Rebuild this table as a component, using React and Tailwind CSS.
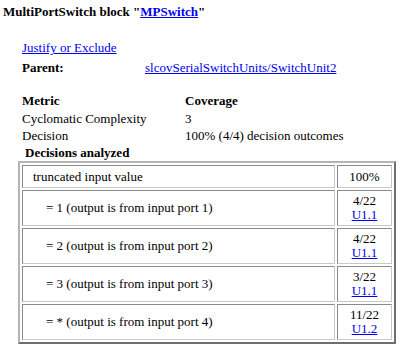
import React from 'react';

const rows = [
  { label: '= 1 (output is from input port 1)', count: '4/22', link: 'U1.1' },
  { label: '= 2 (output is from input port 2)', count: '4/22', link: 'U1.1' },
  { label: '= 3 (output is from input port 3)', count: '3/22', link: 'U1.1' },
  { label: '= * (output is from input port 4)', count: '11/22', link: 'U1.2' },
];

const cell =
  'border border-t-[#8a8a8a] border-l-[#8a8a8a] border-r-[#c8c8c8] border-b-[#c8c8c8]';

const App = () => {
  return (
    <div className="w-[401px] h-[347px] overflow-hidden bg-white text-black [font-family:Liberation_Serif,serif] text-[13px]">
      <div className="pl-[3px] pt-[3px] font-bold leading-[18px]">
        MultiPortSwitch block "<a href="#" className="text-[#0000ee] underline">MPSwitch</a>"
      </div>

      <div className="pl-[22px] mt-[18px] leading-[18px]">
        <a href="#" className="text-[#0000ee] underline">Justify or Exclude</a>
      </div>
      <div className="pl-[22px] mt-[2px] flex leading-[18px]">
        <span className="w-[123px] font-bold">Parent:</span>
        <a href="#" className="text-[#0000ee] underline">slcovSerialSwitchUnits/SwitchUnit2</a>
      </div>

      <div className="pl-[22px] mt-[15px] leading-[17.5px]">
        <div className="flex">
          <span className="w-[163px] font-bold">Metric</span>
          <span className="font-bold">Coverage</span>
        </div>
        <div className="flex">
          <span className="w-[163px]">Cyclomatic Complexity</span>
          <span>3</span>
        </div>
        <div className="flex">
          <span className="w-[163px]">Decision</span>
          <span>100% (4/4) decision outcomes</span>
        </div>
      </div>

      <div className="pl-[25px] font-bold leading-[16px] mt-[0.5px]">Decisions analyzed</div>

      <table className="ml-[18px] w-[378px] border-separate border-spacing-[2px] border-2 border-t-[#b4b4b4] border-l-[#b4b4b4] border-r-[#6e6e6e] border-b-[#6e6e6e]">
        <tbody>
          <tr>
            <td className={`${cell} h-[23px] pl-[10px] leading-[15px] py-0`}>truncated input value</td>
            <td className={`${cell} w-[55px] text-center leading-[15px] py-0`}>100%</td>
          </tr>
          {rows.map((r) => (
            <tr key={r.label}>
              <td className={`${cell} h-[36px] pl-[23px] py-0`}>{r.label}</td>
              <td className={`${cell} w-[55px] text-center leading-[14px] py-0`}>
                <div>{r.count}</div>
                <a href="#" className="text-[#0000ee] underline">{r.link}</a>
              </td>
            </tr>
          ))}
        </tbody>
      </table>
    </div>
  );
};

export default App;
